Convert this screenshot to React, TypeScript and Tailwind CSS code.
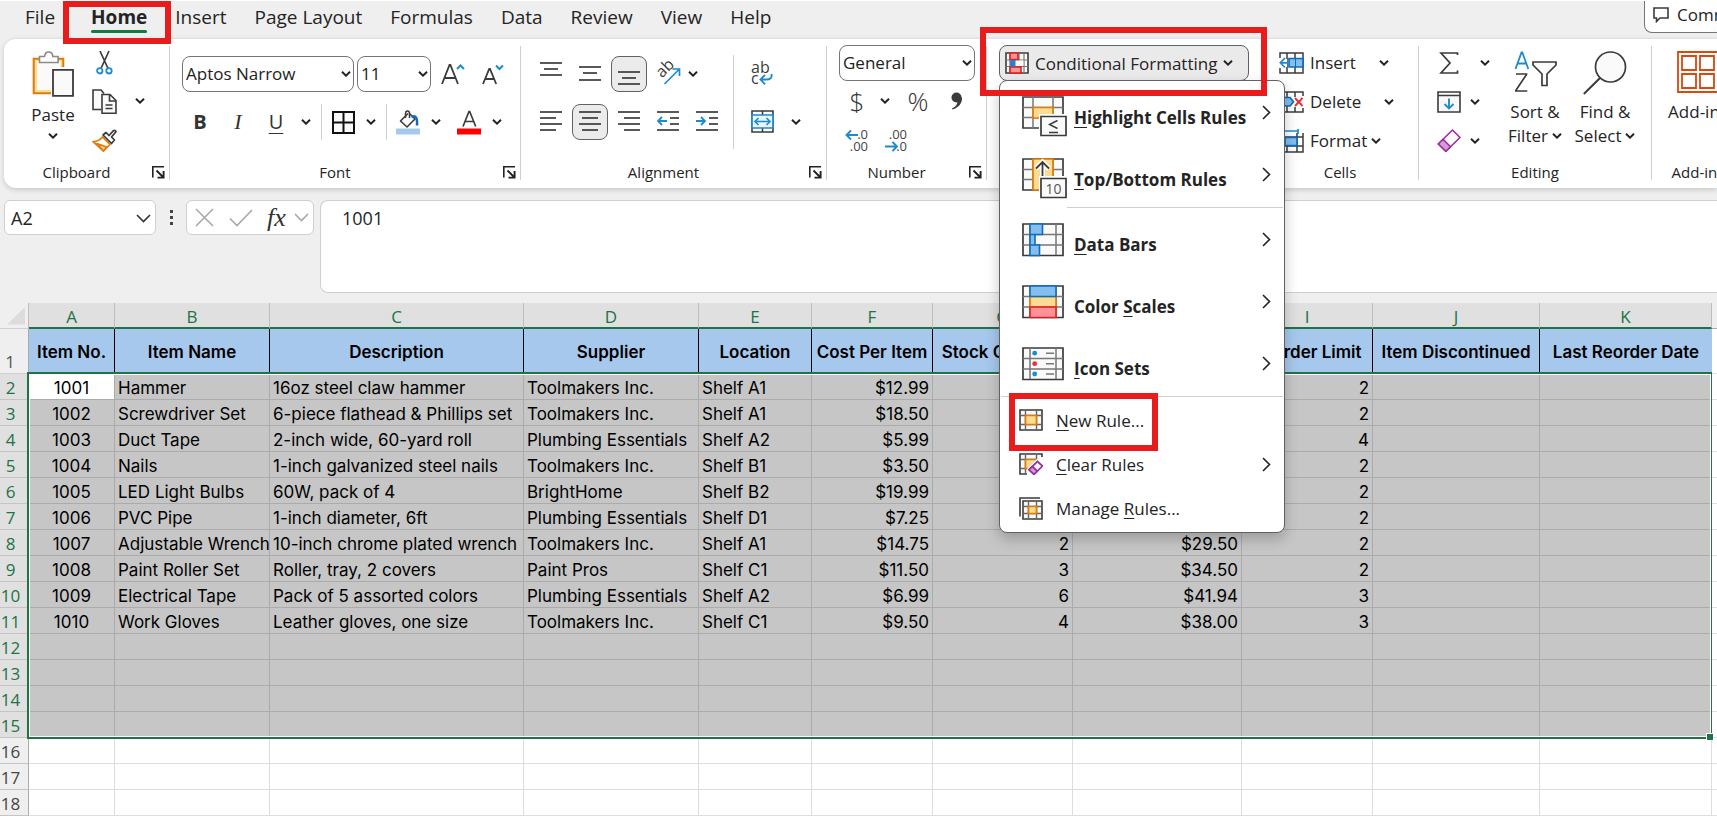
import type { ReactNode } from "react";
import clsx from "clsx";

interface Item {
    no: string;
    name: string;
    description: string;
    supplier: string;
    location: string;
    cost: string;
    stock: string;
    value: string;
    limit: string;
}

const TABS = ["File", "Home", "Insert", "Page Layout", "Formulas", "Data", "Review", "View", "Help"];

const COLUMNS = [
    { letter: "A", title: "Item No.", width: "w-[86px]" },
    { letter: "B", title: "Item Name", width: "w-[155px]" },
    { letter: "C", title: "Description", width: "w-[254px]" },
    { letter: "D", title: "Supplier", width: "w-[175px]" },
    { letter: "E", title: "Location", width: "w-[113px]" },
    { letter: "F", title: "Cost Per Item", width: "w-[121px]" },
    { letter: "G", title: "Stock Quantity", width: "w-[140px]" },
    { letter: "H", title: "Inventory Value", width: "w-[169px]" },
    { letter: "I", title: "Reorder Limit", width: "w-[131px]" },
    { letter: "J", title: "Item Discontinued", width: "w-[167px]" },
    { letter: "K", title: "Last Reorder Date", width: "w-[172px]" },
];

const ITEMS: Item[] = [
    { no: "1001", name: "Hammer", description: "16oz steel claw hammer", supplier: "Toolmakers Inc.", location: "Shelf A1", cost: "$12.99", stock: "", value: "", limit: "2" },
    { no: "1002", name: "Screwdriver Set", description: "6-piece flathead & Phillips set", supplier: "Toolmakers Inc.", location: "Shelf A1", cost: "$18.50", stock: "", value: "", limit: "2" },
    { no: "1003", name: "Duct Tape", description: "2-inch wide, 60-yard roll", supplier: "Plumbing Essentials", location: "Shelf A2", cost: "$5.99", stock: "", value: "", limit: "4" },
    { no: "1004", name: "Nails", description: "1-inch galvanized steel nails", supplier: "Toolmakers Inc.", location: "Shelf B1", cost: "$3.50", stock: "", value: "", limit: "2" },
    { no: "1005", name: "LED Light Bulbs", description: "60W, pack of 4", supplier: "BrightHome", location: "Shelf B2", cost: "$19.99", stock: "", value: "", limit: "2" },
    { no: "1006", name: "PVC Pipe", description: "1-inch diameter, 6ft", supplier: "Plumbing Essentials", location: "Shelf D1", cost: "$7.25", stock: "", value: "", limit: "2" },
    { no: "1007", name: "Adjustable Wrench", description: "10-inch chrome plated wrench", supplier: "Toolmakers Inc.", location: "Shelf A1", cost: "$14.75", stock: "2", value: "$29.50", limit: "2" },
    { no: "1008", name: "Paint Roller Set", description: "Roller, tray, 2 covers", supplier: "Paint Pros", location: "Shelf C1", cost: "$11.50", stock: "3", value: "$34.50", limit: "2" },
    { no: "1009", name: "Electrical Tape", description: "Pack of 5 assorted colors", supplier: "Plumbing Essentials", location: "Shelf A2", cost: "$6.99", stock: "6", value: "$41.94", limit: "3" },
    { no: "1010", name: "Work Gloves", description: "Leather gloves, one size", supplier: "Toolmakers Inc.", location: "Shelf C1", cost: "$9.50", stock: "4", value: "$38.00", limit: "3" },
];

const ROW_NUMBERS = Array.from({ length: 17 }, (_, i) => i + 2);
const LAST_SELECTED_ROW = 15;

const INK = "#3b3b3b";
const BLUE = "#1e8bcd";

/* ---------- small shared pieces ---------- */

const Chevron = ({ className }: { className?: string }) => (
    <svg width="10" height="6" viewBox="0 0 10 6" className={clsx("shrink-0", className)} fill="none" stroke="#222" strokeWidth="2">
        <path d="M1 .8 5 4.6 9 .8" />
    </svg>
);

const DropButton = ({ label, className }: { label: string; className?: string }) => (
    <button aria-label={label} className={clsx("flex h-9 w-4 shrink-0 items-center justify-center", className)}>
        <Chevron />
    </button>
);

const IconButton = ({ label, className, active, children }: { label: string; className?: string; active?: boolean; children: ReactNode }) => (
    <button
        aria-label={label}
        className={clsx("flex h-9 shrink-0 items-center justify-center rounded-lg", active && "border border-[#616161] bg-[#ebebeb]", className)}
    >
        {children}
    </button>
);

const Separator = ({ className }: { className?: string }) => <div className={clsx("w-px shrink-0 bg-[#cfcfcf]", className)} />;

const Highlight = ({ className }: { className: string }) => (
    <div className={clsx("pointer-events-none absolute z-30 border-[6px] border-[#e81c1c]", className)} />
);

interface GroupProps {
    label: string;
    width: string;
    launcher?: boolean;
    last?: boolean;
    children: ReactNode;
}

const Group = ({ label, width, launcher, last, children }: GroupProps) => (
    <>
        <section aria-label={label} className={clsx("relative flex shrink-0 flex-col", width)}>
            <div className="h-[117px]">{children}</div>
            <div className="flex h-[23px] items-center justify-center pt-px text-[15px] leading-none">
                <span className={clsx(launcher && "pr-5")}>{label}</span>
                {launcher && (
                    <button aria-label={`${label} settings`} className="absolute right-1 bottom-1">
                        <svg width="13" height="13" viewBox="0 0 13 13" fill="none" stroke="#222" strokeWidth="1.6">
                            <path d="M.8 11.5V.8H12" />
                            <path d="M4.5 4.5 11 11M11.6 5v6.6H5.5" strokeWidth="1.9" />
                        </svg>
                    </button>
                )}
            </div>
        </section>
        {!last && <Separator className="h-[134px] self-center" />}
    </>
);

/* ---------- ribbon icons ---------- */

const PasteIcon = () => (
    <svg width="42" height="46" viewBox="0 0 42 46" fill="none">
        <path d="M1.7 7.7h29.6v34.6H1.7z" fill="#fbdc91" stroke="#e07b0a" strokeWidth="2" />
        <path d="M5 10h23.5v29H5z" fill="#fafafa" />
        <path d="M7.5 5.5h5c.3-3 2-4.5 4.2-4.5s3.9 1.5 4.2 4.5h5.2v6H7.5z" fill="#fff" stroke="#8a8a8a" strokeWidth="1.6" />
        <path d="M19 16h22v30H19z" fill="#fff" />
        <path d="M21 18.8h20v26H21z" fill="#fafafa" stroke={INK} strokeWidth="1.8" />
    </svg>
);

const CutIcon = () => (
    <svg width="17" height="25" viewBox="0 0 17 25" fill="none">
        <path d="M4 1 11.8 18M13 1 5.2 18" stroke={INK} strokeWidth="1.7" />
        <circle cx="3.8" cy="20.8" r="2.7" stroke={BLUE} strokeWidth="1.8" />
        <circle cx="13" cy="20.8" r="2.7" stroke={BLUE} strokeWidth="1.8" />
    </svg>
);

const CopyIcon = () => (
    <svg width="25" height="25" viewBox="0 0 25 25" fill="#fafafa" stroke={INK} strokeWidth="1.6">
        <path d="M9 20.5H1V1h8l3 3.5" />
        <path d="M10 5.5h8l6 6v12.7H10z" />
        <path d="M17.5 5.5V12H24M13.5 16h7M13.5 19.5h7" fill="none" />
    </svg>
);

const BrushIcon = () => (
    <svg width="25" height="23" viewBox="0 0 25 23">
        <path d="M1 12.5c4 .2 6.8-1.2 9.5-4.5l7.5 7.5-6.5 6.5z" fill="#fff" stroke="#e07b0a" strokeWidth="1.7" strokeLinejoin="round" />
        <path d="M5 14.5 14.5 18l-3 4z" fill="#fbdc91" stroke="#e07b0a" strokeWidth="1.5" strokeLinejoin="round" />
        <path d="m11 6 3-2.500 3 3 4.500-4.800q2-1 2.500 1L19.500 8l3 3-3 3.500z" fill="#fafafa" stroke={INK} strokeWidth="1.7" strokeLinejoin="round" />
    </svg>
);

const BorderIcon = () => (
    <svg width="23" height="23" viewBox="0 0 23 23" fill="#fafafa" stroke="#111" strokeWidth="2">
        <path d="M1 1h21v21H1zM11.5 1v21M1 11.5h21" />
    </svg>
);

const FillIcon = () => (
    <svg width="24" height="25" viewBox="0 0 24 25" fill="none">
        <path d="M12 3.5 4.5 11l6.5 6 8-8-5.5-5.5" fill="#fafafa" stroke={INK} strokeWidth="1.6" strokeLinejoin="round" />
        <path d="M9.5 8V3.5C9.5 0 13.5 0 13.5 3.5V8" stroke={INK} strokeWidth="1.5" />
        <path d="M15.5 7c4.5-2 6 1 5.5 8.5" stroke="#0f6cbd" strokeWidth="2.5" />
        <path d="M0 18.5h24v6H0z" fill="#a6c8ec" />
    </svg>
);

const FontColorIcon = () => (
    <svg width="24" height="25" viewBox="0 0 24 25" fill="none">
        <path d="M6 16.5 12 1.5h.7l6 15M8 11.5h8.8" stroke={INK} strokeWidth="1.7" />
        <path d="M0 18.5h24v6H0z" fill="#f00" />
    </svg>
);

// lines: [x1, x2, y]
const LinesIcon = ({ lines, children }: { lines: number[][]; children?: ReactNode }) => (
    <svg width="22" height="23" viewBox="0 0 22 23" fill="none" stroke={INK} strokeWidth="1.7">
        {lines.map(([a, b, y]) => (
            <path key={y} d={`M${a} ${y}H${b}`} />
        ))}
        {children}
    </svg>
);

const OrientationIcon = () => (
    <svg width="25" height="25" viewBox="0 0 25 25" fill="none" className="overflow-visible">
        <text x="0" y="0" transform="translate(6 17.5) rotate(-45)" fontSize="16" fill={INK} fontFamily="Open Sans, sans-serif">ab</text>
        <path d="M8.5 23 23 8.5M16.5 8H23.5V15" stroke={BLUE} strokeWidth="1.7" />
    </svg>
);

const WrapIcon = () => (
    <svg width="22" height="25" viewBox="0 0 22 25" fill="none" className="overflow-visible">
        <g fill={INK} fontSize="16" fontFamily="Open Sans, sans-serif">
            <text x="0" y="11.5">ab</text>
            <text x="0" y="22.5">c</text>
        </g>
        <path d="M20.5 13c.8 4-1.5 5.5-5 5.5H10M14 13.8 9.5 18.5 14 23.3" stroke={BLUE} strokeWidth="1.9" />
    </svg>
);

const MergeIcon = () => (
    <svg width="23" height="23" viewBox="0 0 23 23" fill="none">
        <path d="M1 1h21v21H1zM11.5 1v4M11.5 18v4" stroke={INK} strokeWidth="1.6" />
        <path d="M1 5h21v13H1z" fill="#eaf4fb" stroke={BLUE} strokeWidth="1.7" />
        <path d="M4 11.5h15M7.5 8 4 11.5 7.5 15M15.5 8l3.5 3.5-3.5 3.5" stroke={BLUE} strokeWidth="1.6" />
    </svg>
);

const CondFormatIcon = () => (
    <svg width="24" height="22" viewBox="0 0 24 22" fill="none">
        <path d="M1 1h22v20H1z" fill="#fafafa" stroke={INK} strokeWidth="1.6" />
        <path d="M5 1v20M14 1v20M19 1v20M1 8h22M1 14.5h22" stroke="#777" strokeWidth="1.2" />
        <path d="M11 8.6h7.4v5.3H11z" fill="#fafafa" />
        <path d="M5 1h8v6.5H5zM5 15h11v6H5z" fill="#ff9299" stroke="#d92121" strokeWidth="1.6" />
        <path d="M5 8h5.5v6.5H5z" fill="#2b7fd0" />
    </svg>
);

const InsertCellsIcon = () => (
    <svg width="25" height="22" viewBox="0 0 25 22" fill="none">
        <path d="M1 6V1h23v20H1v-5M8 1v20M16 1v20" stroke={INK} strokeWidth="1.5" />
        <path d="M10 6.5h14v8.5H10z" fill="#83beec" stroke="#0f6cbd" strokeWidth="1.7" />
        <path d="M16.5 6.5V15" stroke="#0f6cbd" />
        <path d="M0 7h8v8H0z" fill="#fff" />
        <path d="M1.500 10.800H11M6 6 1.300 10.800 6 15.500" stroke={BLUE} strokeWidth="1.7" />
    </svg>
);

const DeleteCellsIcon = () => (
    <svg width="25" height="22" viewBox="0 0 25 22" fill="none">
        <path d="M24 5V1H1v20h23v-4M8 1v20M16 1v5M16 16v5" stroke={INK} strokeWidth="1.5" />
        <path d="M3 6.5h8l3.5 4.3L11 15H3z" fill="#83beec" stroke="#0f6cbd" strokeWidth="1.7" />
        <path d="m16 7 7.500 8M23.500 7 16 15" stroke="#e8323a" strokeWidth="1.9" />
    </svg>
);

const FormatCellsIcon = () => (
    <svg width="25" height="24" viewBox="0 0 25 24" fill="none">
        <path d="M1 4v19h23V4M8 17v6M18 4v19M1 8h23M1 17h23" stroke={INK} strokeWidth="1.5" />
        <path d="M6 8.5h12v8H6z" fill="#83beec" stroke="#0f6cbd" strokeWidth="1.7" />
        <path d="M1 2h18M19 0v5" stroke={BLUE} strokeWidth="1.7" />
    </svg>
);

const SumIcon = () => (
    <svg width="24" height="22" viewBox="0 0 24 22" fill="none" stroke={INK} strokeWidth="1.7">
        <path d="M20.5 3V1H4L13 11 4 21h16.5v-2.5" />
    </svg>
);

const FillDownIcon = () => (
    <svg width="24" height="22" viewBox="0 0 24 22" fill="none">
        <path d="M1 1h22v20H1zM1 4.5h22" fill="#fafafa" stroke={INK} strokeWidth="1.6" />
        <path d="M12 7.5v10M7.5 13l4.5 4.5 4.5-4.5" stroke={BLUE} strokeWidth="1.9" />
    </svg>
);

const EraserIcon = () => (
    <svg width="24" height="23" viewBox="0 0 24 23" fill="none" stroke="#9a2fa0" strokeWidth="1.6" strokeLinejoin="round">
        <path d="M15.5 1 23 8.5 9 22.3 1.3 15z" fill="#fafafa" />
        <path d="m6 10.3 7.5 7.5L9 22.3 1.3 15z" fill="#d69ada" />
    </svg>
);

const SortFilterIcon = () => (
    <svg width="43" height="42" viewBox="0 0 43 42" fill="none">
        <path d="M1.5 18 7.5 1.5h.8L14.3 18M3.5 12.5h9" stroke={BLUE} strokeWidth="1.8" />
        <path d="M2 23h10.5v.5L1.8 39.5v.5h11.5" stroke={INK} strokeWidth="1.7" />
        <path d="M19 11h23v3l-9 9v11.5h-5V23l-9-9z" fill="#fafafa" stroke={INK} strokeWidth="1.7" />
    </svg>
);

const FindIcon = () => (
    <svg width="44" height="44" viewBox="0 0 44 44" fill="none" stroke={INK} strokeWidth="1.7">
        <circle cx="27.5" cy="16" r="15" fill="#fafafa" />
        <path d="M17 27 .8 43" strokeWidth="2" />
    </svg>
);

const AddInsIcon = () => (
    <svg width="42" height="42" viewBox="0 0 42 42" fill="#fff" stroke="#d9480f">
        <path d="M1 1h40v40H1z" strokeWidth="1.8" />
        <path d="M5 5h14v14H5zM23 5h14v14H23zM5 23h14v14H5zM23 23h14v14H23z" strokeWidth="1.8" />
    </svg>
);

/* ---------- menu icons ---------- */

const HighlightCellsIcon = () => (
    <svg width="45" height="41" viewBox="0 0 45 41" fill="none">
        <path d="M1 1h40v31H1z" fill="#fafafa" stroke={INK} strokeWidth="1.7" />
        <path d="M11 1v31M31 1v31M1 11.5h40M1 21.5h40" stroke="#777" strokeWidth="1.5" />
        <path d="M11 11.5h20V22H11z" fill="#fbdc91" stroke="#e07b0a" strokeWidth="1.7" />
        <path d="M17 18h28v23H17z" fill="#fff" />
        <path d="M19 20.5h25v19H19z" fill="#fafafa" stroke={INK} strokeWidth="1.7" />
        <path d="m35.5 24.5-8 4 8 4M27 36.5h9" stroke={INK} strokeWidth="1.4" />
    </svg>
);

const TopBottomIcon = () => (
    <svg width="45" height="41" viewBox="0 0 45 41" fill="none">
        <path d="M1 1h40v31H1z" fill="#fafafa" stroke={INK} strokeWidth="1.7" />
        <path d="M11 1v31M31 1v31M1 11.5h40M1 21.5h40" stroke="#777" strokeWidth="1.5" />
        <path d="M11 1h20v31H11z" fill="#fbdc91" stroke="#e07b0a" strokeWidth="1.7" />
        <path d="M20.5 19V4M14 10.5 20.5 4l6.5 6.5" stroke="#fff" strokeWidth="5" />
        <path d="M20.5 19V4M14 10.5 20.5 4l6.5 6.5" stroke={INK} strokeWidth="1.8" />
        <path d="M17 18h28v23H17z" fill="#fff" />
        <path d="M19 20.5h25v19H19z" fill="#fafafa" stroke={INK} strokeWidth="1.7" />
        <text x="31.5" y="35.5" textAnchor="middle" fontSize="14" fontWeight="400" fill="#555" fontFamily="Open Sans, sans-serif">10</text>
    </svg>
);

const WideGrid = () => (
    <>
        <path d="M1 1h40v31.500H1z" fill="#fafafa" stroke={INK} strokeWidth="1.7" />
        <path d="M8 1v31M34 1v31M1 11.500h40M1 22h40" stroke="#777" strokeWidth="1.5" />
    </>
);

const DataBarsIcon = () => (
    <svg width="45" height="34" viewBox="0 0 45 34" fill="none">
        <WideGrid />
        <path d="M8 1h12.5v10.5H8zM8 11.5h5V22H8zM8 22h9.5v10.5H8z" fill="#83beec" stroke="#0f6cbd" strokeWidth="1.6" />
    </svg>
);

const ColorScalesIcon = () => (
    <svg width="45" height="34" viewBox="0 0 45 34" fill="none" strokeWidth="1.6">
        <WideGrid />
        <path d="M8 11.5h26V22H8z" fill="#fbdc91" stroke="#e07b0a" />
        <path d="M8 1h26v10.5H8z" fill="#83beec" stroke="#0f6cbd" />
        <path d="M8 22h26v10.5H8z" fill="#ff9299" stroke="#d92121" />
    </svg>
);

const IconSetsIcon = () => (
    <svg width="45" height="34" viewBox="0 0 45 34" fill="none">
        <WideGrid />
        <circle cx="12.7" cy="6.2" r="2.4" fill={BLUE} />
        <circle cx="12.7" cy="16.7" r="2.4" fill="#e8323a" />
        <circle cx="12.7" cy="27" r="2.4" fill={BLUE} />
        <path d="M24 6.2h8M24 16.7h8M24 27h8" stroke="#777" strokeWidth="1.5" />
    </svg>
);

const NewRuleIcon = () => (
    <svg width="24" height="22" viewBox="0 0 24 22" fill="none">
        <path d="M1 1h22v20H1z" fill="#fafafa" stroke={INK} strokeWidth="1.6" />
        <path d="M6.5 1v20M17.5 1v20M1 6.5h22M1 15.5h22" stroke="#666" strokeWidth="1.4" />
        <path d="M6.5 6.5h11v9h-11z" fill="#fbdc91" stroke="#e07b0a" strokeWidth="1.7" />
    </svg>
);

const ClearRulesIcon = () => (
    <svg width="24" height="22" viewBox="0 0 24 22" fill="none">
        <path d="M1 1h22v20H1z" fill="#fafafa" stroke={INK} strokeWidth="1.6" />
        <path d="M6.5 1v20M17.5 1v20M1 6.5h22M1 15.5h22" stroke="#666" strokeWidth="1.4" />
        <path d="M6.5 6.5h11v9h-11z" fill="#fbdc91" stroke="#e07b0a" strokeWidth="1.7" />
        <path d="M24 4v18H8v-6L20 4z" fill="#fff" />
        <path d="m18.5 8.5 5 4.5-8.5 8.3-5-4.5z" fill="#fafafa" stroke="#9a2fa0" strokeWidth="1.7" />
        <path d="m13.3 13.5 5 4.5-3.3 3.3-5-4.5z" fill="#d69ada" stroke="#9a2fa0" strokeWidth="1.7" />
    </svg>
);

const ManageRulesIcon = () => (
    <svg width="24" height="23" viewBox="0 0 24 23" fill="none">
        <path d="M1 19.5V1h20" stroke={INK} strokeWidth="1.6" />
        <path d="M4 4h19v18H4z" fill="#fafafa" stroke={INK} strokeWidth="1.6" />
        <path d="M9.5 4v18M17.5 4v18M4 9.5h19M4 16.5h19" stroke="#666" strokeWidth="1.4" />
        <path d="M9.5 9.5h8v7h-8z" fill="#fbdc91" stroke="#e07b0a" strokeWidth="1.7" />
    </svg>
);

/* ---------- conditional formatting menu ---------- */

const Arrow = () => (
    <svg width="9" height="15" viewBox="0 0 9 15" fill="none" stroke="#222" strokeWidth="1.6">
        <path d="M1 1l6.5 6.5L1 14" />
    </svg>
);

// parts: text before, the access key letter, text after
const KeyText = ({ parts }: { parts: [string, string, string] }) => (
    <span>
        {parts[0]}
        <span className="underline decoration-1 underline-offset-3">{parts[1]}</span>
        {parts[2]}
    </span>
);

const BigItem = ({ icon, parts }: { icon: ReactNode; parts: [string, string, string] }) => (
    <button role="menuitem" className="flex h-[62px] w-full items-start pr-[13px] pl-[22px] text-left text-[17px] leading-6 font-bold">
        <span className="mt-[13px] w-[52px]">{icon}</span>
        <span className="mt-[23px] flex-1"><KeyText parts={parts} /></span>
        <span className="mt-[22px]"><Arrow /></span>
    </button>
);

const SmallItem = ({ icon, parts, arrow }: { icon: ReactNode; parts: [string, string, string]; arrow?: boolean }) => (
    <button role="menuitem" className="flex h-11 w-full items-center pr-[13px] pl-[19px] text-left text-[17px] leading-6">
        <span className="w-[37px]">{icon}</span>
        <span className="flex-1 pt-0.5"><KeyText parts={parts} /></span>
        {arrow && <Arrow />}
    </button>
);

const FormattingMenu = () => (
    <div role="menu" className="absolute top-[37px] left-3 z-20 w-[286px] rounded-lg border border-[#616161] bg-white py-0.5 shadow-[0_6px_14px_rgba(0,0,0,0.22)]">
        <BigItem icon={<HighlightCellsIcon />} parts={["", "H", "ighlight Cells Rules"]} />
        <BigItem icon={<TopBottomIcon />} parts={["", "T", "op/Bottom Rules"]} />
        <div className="mr-px mb-0.5 ml-[67px] h-px bg-[#cfcfcf]" />
        <BigItem icon={<DataBarsIcon />} parts={["", "D", "ata Bars"]} />
        <BigItem icon={<ColorScalesIcon />} parts={["Color ", "S", "cales"]} />
        <BigItem icon={<IconSetsIcon />} parts={["", "I", "con Sets"]} />
        <div className="mx-px mb-px h-px bg-[#cfcfcf]" />
        <div className="relative">
            <SmallItem icon={<NewRuleIcon />} parts={["", "N", "ew Rule..."]} />
            <Highlight className="-top-[5px] left-[9px] h-[58px] w-[149px]" />
        </div>
        <SmallItem icon={<ClearRulesIcon />} parts={["", "C", "lear Rules"]} arrow />
        <SmallItem icon={<ManageRulesIcon />} parts={["Manage ", "R", "ules..."]} />
    </div>
);

/* ---------- ribbon ---------- */

const SelectBox = ({ label, value, className }: { label: string; value: string; className: string }) => (
    <div className={clsx("relative h-9 shrink-0", className)}>
        <select aria-label={label} className="h-full w-full appearance-none rounded-lg border border-[#757575] bg-white pl-[3px] text-[17px] text-[#222]">
            <option>{value}</option>
        </select>
        <Chevron className="pointer-events-none absolute top-[15px] right-[3px]" />
    </div>
);

const CellsButton = ({ icon, text, gap }: { icon: ReactNode; text: string; gap: string }) => (
    <button className="flex h-[39px] items-center text-[17px] leading-none">
        <span className="w-[31px]">{icon}</span>
        <span>{text}</span>
        <Chevron className={gap} />
    </button>
);

const Ribbon = () => (
    <div className="ml-1 flex rounded-l-xl border-t border-[#e0e0e0] bg-white pt-1 pb-[5px] shadow-[0_2px_5px_rgba(0,0,0,0.16)]">
        <Group label="Clipboard" width="w-[165px]" launcher>
            <div className="flex pl-[25px]">
                <button className="flex w-12 flex-col items-center pt-2 text-[17px]">
                    <PasteIcon />
                    <span className="mt-1 leading-7">Paste</span>
                    <Chevron className="mt-1" />
                </button>
                <div className="ml-[9px] flex flex-col">
                    <button aria-label="Cut" className="flex h-[39px] w-9 items-center justify-center"><CutIcon /></button>
                    <button aria-label="Copy" className="flex h-[39px] w-9 items-center justify-center"><CopyIcon /></button>
                    <button aria-label="Format Painter" className="flex h-[39px] w-9 items-center justify-center"><BrushIcon /></button>
                </div>
                <DropButton label="Copy options" className="mt-10 ml-2.5" />
            </div>
        </Group>

        <Group label="Font" width="w-[350px]" launcher>
            <div className="flex h-[61px] items-center pl-3">
                <SelectBox label="Font name" value="Aptos Narrow" className="w-[172px]" />
                <SelectBox label="Font size" value="11" className="ml-[3px] w-[74px]" />
                <IconButton label="Increase font size" className="ml-1.5 w-8">
                    <svg width="24" height="22" viewBox="0 0 24 22" fill="none">
                        <path d="M1 21 8.5 2h.9L17 21M3.8 15h10.5" stroke={INK} strokeWidth="1.8" />
                        <path d="m16 6 3.5-3.5L23 6" stroke={BLUE} strokeWidth="2" />
                    </svg>
                </IconButton>
                <IconButton label="Decrease font size" className="ml-2 w-8">
                    <svg width="22" height="22" viewBox="0 0 22 22" fill="none">
                        <path d="M1 21 7.2 6h.8L14.2 21M3.5 16h8.5" stroke={INK} strokeWidth="1.8" />
                        <path d="M14 2.5 17.5 6 21 2.5" stroke={BLUE} strokeWidth="2" />
                    </svg>
                </IconButton>
            </div>
            <div className="flex h-9 items-center pl-3 text-xl leading-none text-[#333]">
                <IconButton label="Bold" className="w-9 font-bold">B</IconButton>
                <IconButton label="Italic" className="ml-0.5 w-9 font-[Liberation_Serif] text-[22px] italic">I</IconButton>
                <IconButton label="Underline" className="ml-0.5 w-9 underline decoration-1 underline-offset-4">U</IconButton>
                <DropButton label="Underline styles" className="ml-1" />
                <Separator className="ml-[7px] h-9" />
                <IconButton label="Borders" className="ml-[3px] w-9"><BorderIcon /></IconButton>
                <DropButton label="Border styles" className="ml-0.5" />
                <Separator className="ml-[7px] h-9" />
                <IconButton label="Fill color" className="ml-[3px] w-9"><FillIcon /></IconButton>
                <DropButton label="Fill colors" className="ml-0.5" />
                <IconButton label="Font color" className="ml-[7px] w-9"><FontColorIcon /></IconButton>
                <DropButton label="Font colors" className="ml-0.5" />
            </div>
        </Group>

        <Group label="Alignment" width="w-[305px]" launcher>
            <div className="flex pl-3">
                <div>
                    <div className="flex h-[61px] items-center gap-[3px]">
                        <IconButton label="Top align" className="w-9"><LinesIcon lines={[[0, 22, 1], [4, 18, 7], [0, 22, 13]]} /></IconButton>
                        <IconButton label="Middle align" className="w-9"><LinesIcon lines={[[0, 22, 5], [4, 18, 11], [0, 22, 18]]} /></IconButton>
                        <IconButton label="Bottom align" className="w-9" active><LinesIcon lines={[[0, 22, 10], [4, 18, 16], [0, 22, 22]]} /></IconButton>
                        <IconButton label="Orientation" className="w-9"><OrientationIcon /></IconButton>
                        <DropButton label="Orientation options" className="-ml-1" />
                    </div>
                    <div className="-mt-[7px] flex h-[49px] items-center gap-[3px]">
                        <IconButton label="Align left" className="w-9"><LinesIcon lines={[[0, 22, 2], [0, 16, 8], [0, 22, 14], [0, 16, 20]]} /></IconButton>
                        <IconButton label="Center" className="w-9" active><LinesIcon lines={[[0, 22, 2], [3, 19, 8], [0, 22, 14], [3, 19, 20]]} /></IconButton>
                        <IconButton label="Align right" className="w-9"><LinesIcon lines={[[0, 22, 2], [6, 22, 8], [0, 22, 14], [6, 22, 20]]} /></IconButton>
                        <IconButton label="Decrease indent" className="w-9">
                            <LinesIcon lines={[[0, 22, 2], [13, 22, 8], [13, 22, 14], [0, 22, 20]]}>
                                <path d="M10 11H1M5 7l-4 4 4 4" stroke={BLUE} strokeWidth="1.8" />
                            </LinesIcon>
                        </IconButton>
                        <IconButton label="Increase indent" className="w-9">
                            <LinesIcon lines={[[0, 22, 2], [13, 22, 8], [13, 22, 14], [0, 22, 20]]}>
                                <path d="M0 11h9M5 7l4 4-4 4" stroke={BLUE} strokeWidth="1.8" />
                            </LinesIcon>
                        </IconButton>
                    </div>
                </div>
                <Separator className="mt-3 ml-2 h-[94px]" />
                <div className="pl-2.5">
                    <div className="flex h-[61px] items-center">
                        <IconButton label="Wrap text" className="w-9"><WrapIcon /></IconButton>
                    </div>
                    <div className="-mt-[7px] flex h-[49px] items-center">
                        <IconButton label="Merge and center" className="w-9"><MergeIcon /></IconButton>
                        <DropButton label="Merge options" className="ml-2" />
                    </div>
                </div>
            </div>
        </Group>

        <Group label="Number" width="w-[159px]" launcher>
            <div className="pt-0.5 pl-3">
                <SelectBox label="Number format" value="General" className="w-[136px]" />
            </div>
            <div className="flex h-10 items-center pl-3 text-[26px] leading-none font-light text-[#333]">
                <IconButton label="Accounting format" className="w-9">$</IconButton>
                <DropButton label="Currencies" className="ml-0.5" />
                <IconButton label="Percent style" className="ml-[7px] w-9">%</IconButton>
                <IconButton label="Comma style" className="ml-[3px] w-9">
                    <svg width="12" height="18" viewBox="0 0 12 18" fill={INK}>
                        <circle cx="5.5" cy="5.5" r="5" />
                        <path d="M11 5c.5 6-3 10.5-9.5 12.5l-.5-1C5 14.5 6.5 12 6.500 9z" />
                    </svg>
                </IconButton>
            </div>
            <div className="flex h-[39px] items-center gap-[3px] pl-3">
                <IconButton label="Increase decimal" className="w-9">
                    <svg width="24" height="25" viewBox="0 0 24 25" fill="#444" fontSize="13" fontFamily="Open Sans, sans-serif" className="overflow-visible">
                        <path d="M13 7H1.5M6 2.5 1.5 7 6 11.5" fill="none" stroke={BLUE} strokeWidth="1.9" />
                        <text x="23" y="11" textAnchor="end">.0</text>
                        <text x="23" y="23" textAnchor="end">.00</text>
                    </svg>
                </IconButton>
                <IconButton label="Decrease decimal" className="w-9">
                    <svg width="24" height="25" viewBox="0 0 24 25" fill="#444" fontSize="13" fontFamily="Open Sans, sans-serif" className="overflow-visible">
                        <path d="M1 18.5h12M8.5 14l4.5 4.5L8.5 23" fill="none" stroke={BLUE} strokeWidth="1.9" />
                        <text x="23" y="11" textAnchor="end">.00</text>
                        <text x="23" y="23" textAnchor="end">.0</text>
                    </svg>
                </IconButton>
            </div>
        </Group>

        <Group label="Styles" width="w-[274px]">
            <div className="pt-0.5 pl-3">
                <button aria-haspopup="menu" aria-expanded="true" className="flex h-9 w-[250px] items-center rounded-lg border border-[#616161] bg-[#eaeaea] pl-[5px] text-[17px] leading-none">
                    <CondFormatIcon />
                    <span className="ml-1.5">Conditional Formatting</span>
                    <Chevron className="ml-1.5" />
                </button>
            </div>
            <FormattingMenu />
            <Highlight className="-top-4 -left-[7px] h-[69px] w-[287px]" />
        </Group>

        <Group label="Cells" width="w-[156px]">
            <div className="flex flex-col pl-[17px]">
                <CellsButton icon={<InsertCellsIcon />} text="Insert" gap="ml-[23px]" />
                <CellsButton icon={<DeleteCellsIcon />} text="Delete" gap="ml-[23px]" />
                <CellsButton icon={<FormatCellsIcon />} text="Format" gap="ml-1" />
            </div>
        </Group>

        <Group label="Editing" width="w-[232px]">
            <div className="flex pl-3">
                <div className="w-[64px]">
                    <div className="flex h-[39px] items-center"><IconButton label="AutoSum" className="w-9"><SumIcon /></IconButton><DropButton label="Sum options" className="ml-2.5" /></div>
                    <div className="flex h-[39px] items-center"><IconButton label="Fill" className="w-9"><FillDownIcon /></IconButton><DropButton label="Fill options" /></div>
                    <div className="flex h-[39px] items-center"><IconButton label="Clear" className="w-9"><EraserIcon /></IconButton><DropButton label="Clear options" /></div>
                </div>
                <button className="flex w-20 flex-col items-center pt-2 text-[17px] leading-6 whitespace-nowrap">
                    <span className="h-[49px]"><SortFilterIcon /></span>
                    <span>Sort &amp;</span>
                    <span className="flex items-center gap-1">Filter <Chevron /></span>
                </button>
                <button className="flex w-[60px] flex-col items-center pt-2 text-[17px] leading-6 whitespace-nowrap">
                    <span className="h-[49px]"><FindIcon /></span>
                    <span>Find &amp;</span>
                    <span className="flex items-center gap-1">Select <Chevron /></span>
                </button>
            </div>
        </Group>

        <Group label="Add-ins" width="w-[92px]" last>
            <button className="flex w-full flex-col items-center pt-2 text-[17px] leading-6">
                <span className="h-[49px]"><AddInsIcon /></span>
                <span>Add-ins</span>
            </button>
        </Group>
    </div>
);

const TabBar = () => (
    <div className="flex h-[38px] border-t border-white">
        <nav className="flex items-start pl-[11px]">
            {TABS.map((tab) => (
                <button key={tab} className={clsx("relative px-[14px] text-[19px] leading-8", tab === "Home" && "ml-2 font-bold")}>
                    {tab}
                    {tab === "Home" && (
                        <>
                            <span className="absolute inset-x-[14px] top-[29px] h-[3px] rounded-full bg-[#107c41]" />
                            <Highlight className="top-0 -right-[10px] -left-[14px] h-[43px]" />
                        </>
                    )}
                </button>
            ))}
        </nav>
        <div className="ml-auto w-[73px] overflow-hidden">
            <button className="flex h-8 items-center gap-2 rounded-bl-lg border-b border-l border-[#757575] bg-white pr-3 pb-1 pl-2 text-[17px]">
                <svg width="16" height="16" viewBox="0 0 16 16" fill="none" stroke={INK} strokeWidth="1.6" className="shrink-0">
                    <path d="M1 1h14v10H7l-3.5 3.5V11H1z" />
                </svg>
                Comments
            </button>
        </div>
    </div>
);

const FormulaBar = () => (
    <div className="flex items-start pt-3 pb-2.5 pl-1">
        <div className="relative h-[35px] w-[152px]">
            <input aria-label="Name box" defaultValue="A2" className="h-full w-full rounded-md border border-[#cfcfcf] bg-white pl-1.5 text-[18px]" />
            <svg width="15" height="9" viewBox="0 0 15 9" fill="none" stroke="#333" strokeWidth="1.6" className="absolute top-[14px] right-[5px]">
                <path d="m1 1 6.5 6.5L14 1" />
            </svg>
        </div>
        <div className="flex h-[35px] w-[30px] flex-col items-center justify-center gap-[3px]">
            <span className="size-[3px] bg-[#444]" />
            <span className="size-[3px] bg-[#444]" />
            <span className="size-[3px] bg-[#444]" />
        </div>
        <div className="flex h-[35px] w-32 items-center rounded-md border border-[#cfcfcf] bg-white pl-2">
            <button aria-label="Cancel">
                <svg width="20" height="20" viewBox="0 0 20 20" fill="none" stroke="#a8a8a8" strokeWidth="1.6"><path d="m1 1 17 17M18 1 1 18" /></svg>
            </button>
            <button aria-label="Enter" className="ml-3.5">
                <svg width="24" height="18" viewBox="0 0 24 18" fill="none" stroke="#a8a8a8" strokeWidth="1.6"><path d="m1 9.5 7 7L23 1" /></svg>
            </button>
            <button aria-label="Insert function" className="ml-3.5 font-[Liberation_Serif] text-[26px] leading-none text-[#333] italic">fx</button>
            <button aria-label="Function list" className="ml-2">
                <svg width="15" height="9" viewBox="0 0 15 9" fill="none" stroke="#a8a8a8" strokeWidth="1.6"><path d="m1 1 6.5 6.5L14 1" /></svg>
            </button>
        </div>
        <textarea
            aria-label="Formula bar"
            defaultValue="1001"
            className="ml-1.5 block h-[93px] flex-1 resize-none rounded-l-lg border border-r-0 border-[#cfcfcf] bg-white px-[21px] pt-1 text-[18px] leading-[26px]"
        />
    </div>
);

/* ---------- sheet ---------- */

const rowCells = (item?: Item) =>
    item
        ? [item.no, item.name, item.description, item.supplier, item.location, item.cost, item.stock, item.value, item.limit, "", ""]
        : COLUMNS.map(() => "");

const Sheet = () => (
    <div className="relative">
        <table className="w-full table-fixed border-separate border-spacing-0 leading-none">
            <colgroup>
                <col className="w-[29px]" />
                {COLUMNS.map((col) => (
                    <col key={col.letter} className={col.width} />
                ))}
                <col />
            </colgroup>
            <thead>
                <tr className="h-[26px] text-[17px] text-[#217346]">
                    <th aria-label="Select all" className="border-r border-b border-r-[#bdbdbd] border-b-[#cfcfcf] p-0">
                        <svg width="18" height="18" viewBox="0 0 18 18" className="ml-[7px]"><path d="M18 0v17.5H0z" fill="#dcdcdc" /></svg>
                    </th>
                    {COLUMNS.map((col) => (
                        <th key={col.letter} className="border-r border-b-2 border-r-[#bdbdbd] border-b-[#217346] bg-[#e0e0e0] p-0 pt-0.5 font-normal">
                            {col.letter}
                        </th>
                    ))}
                    <th className="border-b border-[#ababab] p-0" />
                </tr>
            </thead>
            <tbody className="bg-white font-[Inter] text-[17px] text-black">
                <tr className="h-[45px]">
                    <th className="border-r border-b border-r-[#ababab] border-b-[#cfcfcf] bg-[#efefef] p-0 pr-2 pb-[3px] align-bottom font-[Open_Sans] font-normal text-[#555]">1</th>
                    {COLUMNS.map((col) => (
                        <th key={col.letter} className="border-r border-b border-black bg-[#a6c8ec] p-0 pt-0.5 font-semibold whitespace-nowrap last-of-type:border-r-0">
                            {col.title}
                        </th>
                    ))}
                    <td className="border-b border-[#e0e0e0] p-0" />
                </tr>
                {ROW_NUMBERS.map((n) => {
                    const selected = n <= LAST_SELECTED_ROW;
                    return (
                        <tr key={n} className="h-[26px]">
                            <th
                                className={clsx(
                                    "border-r border-b border-r-[#ababab] border-b-[#c4c4c4] p-0 pt-0.5 pr-[7px] font-[Open_Sans] font-normal",
                                    selected ? "bg-[#e0e0e0] text-[#217346]" : "bg-[#efefef] text-[#444]"
                                )}
                            >
                                {n}
                            </th>
                            {rowCells(ITEMS[n - 2]).map((text, i) => (
                                <td
                                    key={COLUMNS[i].letter}
                                    className={clsx(
                                        "border-r border-b px-[3px] pt-1 pb-0 whitespace-nowrap",
                                        selected ? "border-[#ababab]" : "border-[#dedede]",
                                        selected && !(n === 2 && i === 0) && "bg-[#c6c6c6]",
                                        i === 0 && "text-center",
                                        i >= 5 && "text-right"
                                    )}
                                >
                                    {text}
                                </td>
                            ))}
                            <td className="border-b border-[#e0e0e0] p-0" />
                        </tr>
                    );
                })}
            </tbody>
        </table>
        {/* selection frame with fill handle */}
        <div className="pointer-events-none absolute top-[69px] left-[27px] h-[367px] w-[1685px] border-2 border-r border-[#217346] shadow-[inset_0_0_0_1px_#fff]">
            <span className="absolute -right-0.5 -bottom-[3px] size-[7px] border-t border-l border-white bg-[#217346]" />
        </div>
    </div>
);

export default function App() {
    return (
        <div className="min-h-screen overflow-x-clip bg-[#efefef] font-['Open_Sans',sans-serif] text-[#242424]">
            <TabBar />
            <Ribbon />
            <FormulaBar />
            <Sheet />
        </div>
    );
}
